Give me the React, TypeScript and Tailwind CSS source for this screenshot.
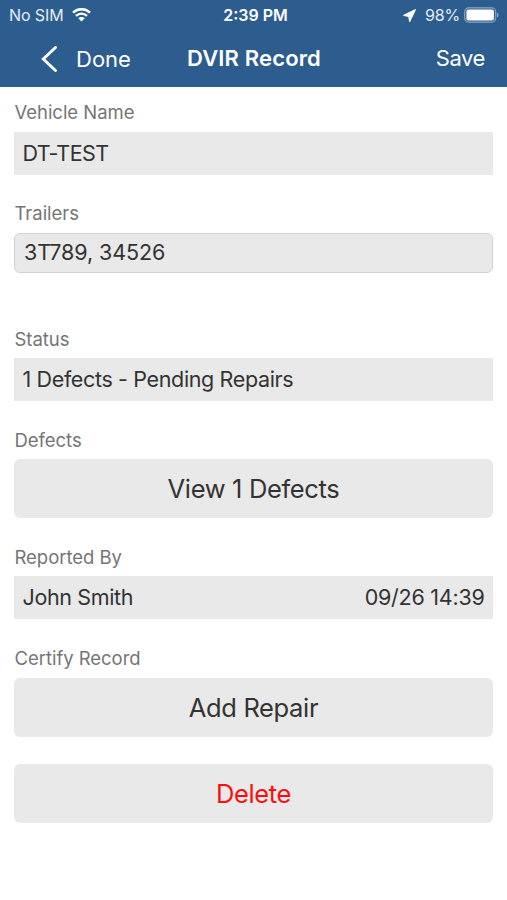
import type { ReactNode } from "react";

function StatusBar() {
  return (
    <div className="flex h-[30px] items-center text-[16px] leading-none">
      <div className="flex w-[170px] items-center pl-[9px]">
        <span className="tracking-[-0.1px] text-[#e3ecf5]">No SIM</span>
        <svg className="ml-2 h-[15px] w-[19px]" viewBox="0 0 19 15" fill="none">
          <path d="M1 4.6a12.4 12.4 0 0 1 17 0" stroke="white" strokeWidth="2.5" />
          <path d="M4 7.8a8 8 0 0 1 11 0" stroke="white" strokeWidth="2.4" />
          <path d="M6.3 10.2a4.6 4.6 0 0 1 6.4 0L9.5 13.4z" fill="white" />
        </svg>
      </div>
      <div className="w-[170px] pl-px text-center font-semibold">2:39 PM</div>
      <div className="flex flex-1 items-center justify-end pr-2">
        <svg className="h-[13px] w-[13px]" viewBox="0 0 13 13">
          <path d="M12.3.8.9 6.3l5 1 .8 5z" fill="white" stroke="white" strokeWidth="1.3" strokeLinejoin="round" />
        </svg>
        <span className="ml-[9px] tracking-[-0.2px] text-[#e3ecf5]">98%</span>
        <svg className="ml-1 h-4 w-[35px]" viewBox="0 0 35 16" fill="none">
          <rect x=".7" y=".9" width="31" height="14.2" rx="4" stroke="#88a7c8" strokeWidth="1.2" />
          <rect x="2.4" y="2.6" width="27.6" height="10.8" rx="2.2" fill="white" />
          <path d="M33 5.5v5q1.6-.8 1.6-2.5T33 5.5" fill="#88a7c8" />
        </svg>
      </div>
    </div>
  );
}

function Label({ children }: { children: ReactNode }) {
  return (
    <div className="h-5 pl-[0.5px] text-[18.5px] leading-5 tracking-[-0.04px] text-[#757575]">
      {children}
    </div>
  );
}

function Field({ children }: { children: ReactNode }) {
  return (
    <div className="flex h-[43px] items-center justify-between bg-[#e9e9e9] px-[8.5px] text-[21.5px] tracking-[-0.36px]">
      {children}
    </div>
  );
}

function ActionButton({ children, danger = false }: { children: ReactNode; danger?: boolean }) {
  return (
    <button
      className={`block h-[59px] w-full rounded-[6px] bg-[#e9e9e9] pt-0.5 text-[25.5px] tracking-[-0.35px] ${danger ? "text-[#fa0f0f]" : ""}`}
    >
      {children}
    </button>
  );
}

export default function App() {
  return (
    <div className="h-[900px] w-[507px] overflow-hidden bg-white font-['Inter',sans-serif] text-[#333333]">
      <header className="h-[87px] bg-[#2d5c8f] text-white">
        <StatusBar />
        <nav className="flex h-[57px] items-center text-[22px]">
          <button className="flex w-[170px] items-center pl-[41px] pt-px">
            <svg className="mr-[19px] h-[27px] w-[16px]" viewBox="0 0 16 27" fill="none">
              <path d="M14.5 1.5 2.3 13 14.5 24.5" stroke="white" strokeWidth="2.9" strokeLinecap="round" />
            </svg>
            Done
          </button>
          <h1 className="w-[168px] pb-px text-center font-semibold tracking-[0.15px]">DVIR Record</h1>
          <button className="flex-1 pr-[22px] text-right tracking-[-0.4px]">Save</button>
        </nav>
      </header>

      <main className="px-[14px] pt-[15px]">
        <Label>Vehicle Name</Label>
        <div className="mt-[10px]">
          <Field>
            <span className="pb-px tracking-[-0.55px]">DT-TEST</span>
          </Field>
        </div>

        <div className="mt-[28px]">
          <Label>Trailers</Label>
        </div>
        <div className="mt-[10px] flex h-10 items-center rounded-[6px] border border-[#d2d2d2] bg-[#e9e9e9] px-[9px] pb-0.5 text-[21.5px] tracking-[-0.1px]">
          3T789, 34526
        </div>

        <div className="mt-[56px]">
          <Label>Status</Label>
        </div>
        <div className="mt-[9px]">
          <Field>1 Defects - Pending Repairs</Field>
        </div>

        <div className="mt-[29px]">
          <Label>Defects</Label>
        </div>
        <div className="mt-[9px]">
          <ActionButton>View 1 Defects</ActionButton>
        </div>

        <div className="mt-[29px]">
          <Label>Reported By</Label>
        </div>
        <div className="mt-[9px]">
          <Field>
            <span>John Smith</span>
            <span className="tracking-[-0.25px]">09/26 14:39</span>
          </Field>
        </div>

        <div className="mt-[29px]">
          <Label>Certify Record</Label>
        </div>
        <div className="mt-[10px]">
          <ActionButton>Add Repair</ActionButton>
        </div>
        <div className="mt-[27px]">
          <ActionButton danger>Delete</ActionButton>
        </div>
      </main>
    </div>
  );
}
